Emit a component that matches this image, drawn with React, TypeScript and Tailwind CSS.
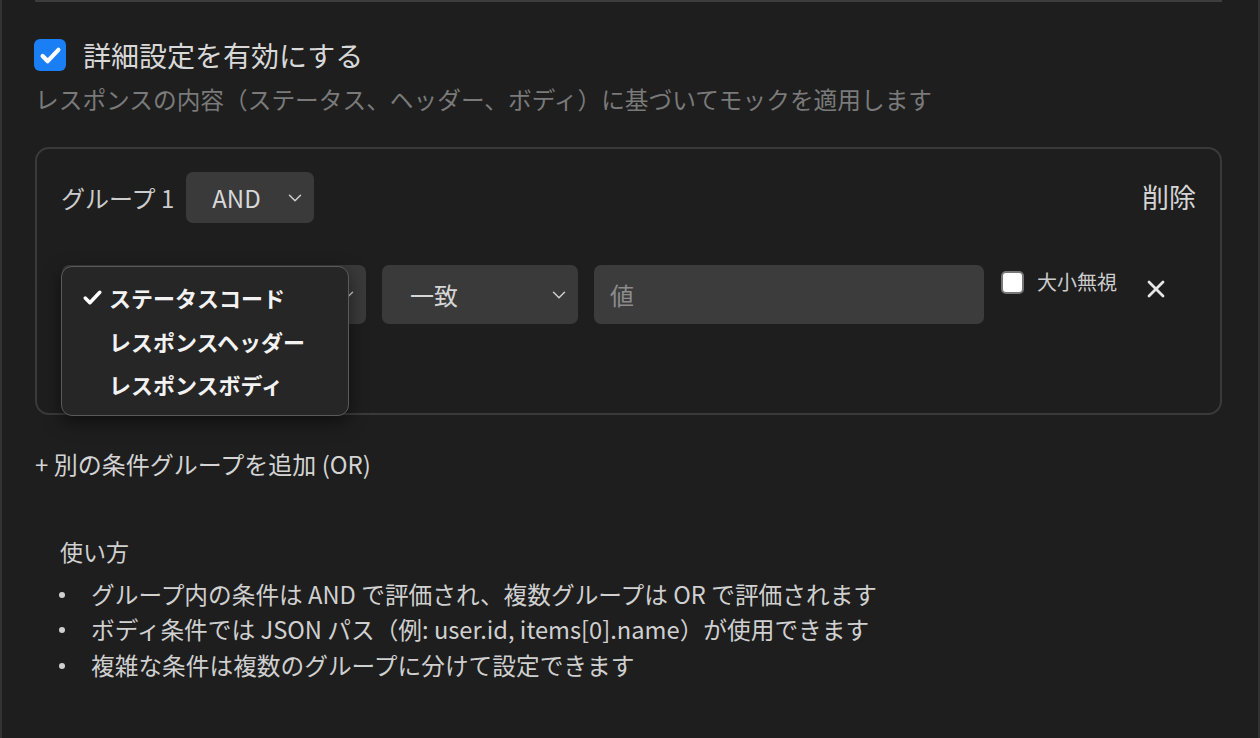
import { ChevronDown, X } from "lucide-react";

const font = { fontFamily: '"Noto Sans CJK JP", "Noto Sans", sans-serif' };

function CheckMark({ className }: { className?: string }) {
  return (
    <svg viewBox="0 0 24 24" className={className} fill="none" stroke="currentColor" strokeLinecap="round" strokeLinejoin="round">
      <path d="M5 12.5l4.5 4.5L19 7" />
    </svg>
  );
}

function FieldSelect({ label, width }: { label: string; width: string }) {
  return (
    <div className={`flex h-[59px] items-center justify-between rounded-[7px] bg-[#3a3a3a] pl-[28px] pr-[8px] ${width}`}>
      <span className="text-[24px] text-[#d6d6d6]">{label}</span>
      <ChevronDown size={22} strokeWidth={1.6} className="text-[#cfcfcf]" />
    </div>
  );
}

const usage = [
  "グループ内の条件は AND で評価され、複数グループは OR で評価されます",
  "ボディ条件では JSON パス（例: user.id, items[0].name）が使用できます",
  "複雑な条件は複数のグループに分けて設定できます",
];

export default function App() {
  return (
    <div style={font} className="h-[738px] w-[1260px] overflow-hidden border-x-2 border-[#333333] bg-[#1e1e1e]">
      <div className="pl-[33px] pr-[36px]">
        <div className="h-[2px] bg-[#3d3d3d]" />

        <label className="mt-[37px] flex items-center gap-[17px]">
          <span className="-ml-px flex h-[32px] w-[32px] items-center justify-center rounded-[6px] bg-[#1a7ef5] text-white">
            <CheckMark className="h-[27px] w-[27px] stroke-[3.8]" />
          </span>
          <span className="text-[28px] leading-none text-[#d8d8d8]">詳細設定を有効にする</span>
        </label>
        <p className="mt-[12px] text-[23.7px] leading-[32px] text-[#7a7a7a]">
          レスポンスの内容（ステータス、ヘッダー、ボディ）に基づいてモックを適用します
        </p>

        <div className="relative mt-[32px] h-[268px] rounded-[14px] border-2 border-[#3a3a3a] px-[24px] pt-[23px]">
          <div className="flex items-center justify-between">
            <div className="flex items-center gap-[12px]">
              <span className="text-[24px] text-[#cccccc]">グループ 1</span>
              <div className="flex h-[51px] w-[128px] items-center justify-between rounded-[7px] bg-[#3a3a3a] pl-[26px] pr-[8px]">
                <span className="text-[24px] text-[#d8d8d8]">AND</span>
                <ChevronDown size={22} strokeWidth={1.6} className="text-[#cfcfcf]" />
              </div>
            </div>
            <button className="text-[27px] text-[#d4d4d4]">削除</button>
          </div>

          <div className="relative mt-[42px] flex items-start">
            <FieldSelect label="ステータスコード" width="ml-px w-[304px]" />
            <div className="ml-[16px]">
              <FieldSelect label="一致" width="w-[196px]" />
            </div>
            <input
              placeholder="値"
              className="ml-[16px] h-[59px] w-[390px] rounded-[7px] bg-[#3c3c3c] px-[16px] text-[24px] text-[#d6d6d6] outline-none placeholder:text-[#8c8c8c]"
            />
            <label className="ml-[17px] mt-[4px] flex items-center gap-[13px]">
              <span className="h-[23px] w-[23px] rounded-[5px] border-2 border-[#777777] bg-white" />
              <span className="text-[20px] leading-[26px] text-[#cccccc]">大小無視</span>
            </label>
            <button className="ml-[25px] mt-[10px] text-[#e6e6e6]">
              <X size={28} strokeWidth={2.4} />
            </button>

            <div className="absolute left-0 top-px h-[150px] w-[288px] rounded-[11px] border border-[#5a5a5a] bg-[#262626] py-[9px] shadow-[0_6px_18px_rgba(0,0,0,0.5)]">
              {["ステータスコード", "レスポンスヘッダー", "レスポンスボディ"].map((item, i) => (
                <div key={item} className="flex h-[43.5px] items-center pl-[18px]">
                  <span className="w-[29px]">
                    {i === 0 ? <CheckMark className="h-[25px] w-[25px] stroke-[3.4] text-white" /> : null}
                  </span>
                  <span className="text-[22px] font-bold text-[#f2f2f2]">{item}</span>
                </div>
              ))}
            </div>
          </div>
        </div>

        <button className="mt-[32px] text-[24px] leading-[34px] text-[#d4d4d4]">+ 別の条件グループを追加 (OR)</button>

        <div className="mt-[54px] pl-[25px]">
          <h3 className="text-[23px] leading-[32px] text-[#d0d0d0]">使い方</h3>
          <ul className="mt-[10px]">
            {usage.map((line) => (
              <li key={line} className="flex h-[35.5px] items-center text-[23.7px] text-[#d0d0d0]">
                <span className="mr-[26px] -ml-px h-[6px] w-[6px] shrink-0 rounded-full bg-[#d0d0d0]" />
                {line}
              </li>
            ))}
          </ul>
        </div>
      </div>
    </div>
  );
}
